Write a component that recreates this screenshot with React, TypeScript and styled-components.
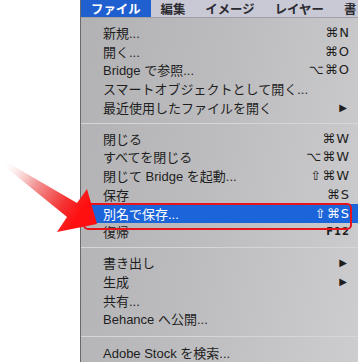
import React from 'react'
import styled, { createGlobalStyle } from 'styled-components'

const GlobalStyle = createGlobalStyle`
  html, body {
    margin: 0;
    padding: 0;
    background: #ffffff;
  }
  body {
    font-family: "Liberation Sans", "Noto Sans CJK JP", sans-serif;
  }
`

type Item =
  | { kind: 'item'; label: string; shortcut?: string; small?: boolean; submenu?: boolean; active?: boolean }
  | { kind: 'sep'; wide?: boolean }

const items: Item[] = [
  { kind: 'item', label: '新規...', shortcut: '⌘N' },
  { kind: 'item', label: '開く...', shortcut: '⌘O' },
  { kind: 'item', label: 'Bridge で参照...', shortcut: '⌥⌘O' },
  { kind: 'item', label: 'スマートオブジェクトとして開く...' },
  { kind: 'item', label: '最近使用したファイルを開く', submenu: true },
  { kind: 'sep' },
  { kind: 'item', label: '閉じる', shortcut: '⌘W' },
  { kind: 'item', label: 'すべてを閉じる', shortcut: '⌥⌘W' },
  { kind: 'item', label: '閉じて Bridge を起動...', shortcut: '⇧⌘W' },
  { kind: 'item', label: '保存', shortcut: '⌘S' },
  { kind: 'item', label: '別名で保存...', shortcut: '⇧⌘S', active: true },
  { kind: 'item', label: '復帰', shortcut: 'F12', small: true },
  { kind: 'sep' },
  { kind: 'item', label: '書き出し', submenu: true },
  { kind: 'item', label: '生成', submenu: true },
  { kind: 'item', label: '共有...' },
  { kind: 'item', label: 'Behance へ公開...' },
  { kind: 'sep', wide: true },
  { kind: 'item', label: 'Adobe Stock を検索...' },
]

const menus = ['ファイル', '編集', 'イメージ', 'レイヤー', '書']

export default function App() {
  return (
    <Page>
      <GlobalStyle />
      <Panel>
        <MenuBar>
          {menus.map((m, i) => (
            <MenuTitle key={m} $open={i === 0}>
              {m}
            </MenuTitle>
          ))}
        </MenuBar>
        <Dropdown>
          {items.map((it, i) =>
            it.kind === 'sep' ? (
              <Separator key={i} $wide={!!it.wide} />
            ) : (
              <Row key={i} $active={!!it.active}>
                <Label>{it.label}</Label>
                {it.shortcut && <Shortcut $small={!!it.small}>{it.shortcut}</Shortcut>}
                {it.submenu && <SubArrow>▶</SubArrow>}
              </Row>
            )
          )}
        </Dropdown>
      </Panel>
      <Highlight />
      <Arrow width="120" height="240" viewBox="0 0 120 240">
        <defs>
          <linearGradient id="arrowFill" gradientUnits="userSpaceOnUse" x1="4" y1="163" x2="80" y2="214">
            <stop offset="0" stopColor="#ffffff" stopOpacity="0.2" />
            <stop offset="0.4" stopColor="#f29a9a" />
            <stop offset="0.8" stopColor="#f43030" />
            <stop offset="1" stopColor="#ff0f0f" />
          </linearGradient>
        </defs>
        <polygon
          points="5,161 77,203 87,189 97,224 57,232 67,217 3,165"
          fill="url(#arrowFill)"
        />
      </Arrow>
    </Page>
  )
}

const Page = styled.div`
  position: relative;
  width: 358px;
  height: 362px;
  overflow: hidden;
  padding-left: 80px;
  box-sizing: border-box;
`

const Panel = styled.div`
  width: 278px;
  height: 100%;
  border-left: 1px solid #6a6a6a;
  display: flex;
  flex-direction: column;
  background: linear-gradient(100deg, #b2b2b4 0%, #bcbcbe 45%, #cdcdcf 100%);
`

const MenuBar = styled.div`
  height: 21px;
  display: flex;
  align-items: stretch;
  background: #c8c9d5;
  border-bottom: 1px solid #a0a0a6;
  box-sizing: border-box;
  overflow: hidden;
`

const MenuTitle = styled.div<{ $open: boolean }>`
  display: flex;
  align-items: center;
  padding: 0 10px;
  font-size: 12.4px;
  font-weight: bold;
  white-space: nowrap;
  color: ${(p) => (p.$open ? '#ffffff' : '#2a2a30')};
  background: ${(p) => (p.$open ? '#1f5fcf' : 'transparent')};
`

const Dropdown = styled.div`
  display: flex;
  flex-direction: column;
  padding-top: 5px;
`

const Row = styled.div<{ $active: boolean }>`
  height: 18.75px;
  display: flex;
  align-items: center;
  padding: 0 9px 0 22px;
  font-size: 13px;
  color: ${(p) => (p.$active ? '#ffffff' : '#1e1e1e')};
  background: ${(p) => (p.$active ? '#1c64d9' : 'transparent')};
`

const Label = styled.span`
  flex: 1;
  white-space: nowrap;
`

const Shortcut = styled.span<{ $small: boolean }>`
  font-family: "DejaVu Sans", "Liberation Sans", sans-serif;
  font-size: ${(p) => (p.$small ? '10px' : '13px')};
  font-weight: ${(p) => (p.$small ? 'bold' : 'normal')};
  letter-spacing: 1px;
`

const SubArrow = styled.span`
  font-family: "DejaVu Sans", sans-serif;
  font-size: 10px;
  margin-right: 3px;
`

const Separator = styled.div<{ $wide: boolean }>`
  height: 1px;
  margin: ${(p) => (p.$wide ? '8px 0 6px' : '6px 0 5px')};
  background: #d6d6d8;
`

const Highlight = styled.div`
  position: absolute;
  left: 83px;
  top: 203px;
  width: 269px;
  height: 27px;
  border: 2px solid #e8141c;
  border-radius: 5px;
  box-sizing: border-box;
`

const Arrow = styled.svg`
  position: absolute;
  left: 0;
  top: 0;
`
